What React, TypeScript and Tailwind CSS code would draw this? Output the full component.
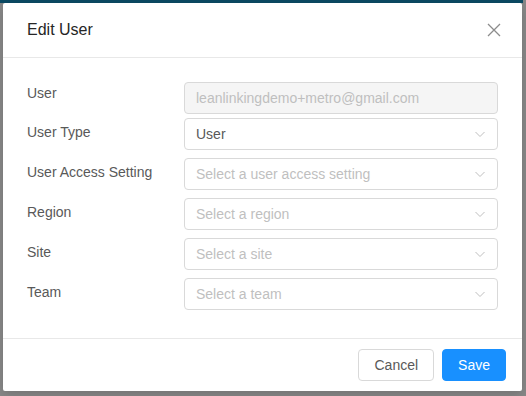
import React from 'react';

const Chevron = () => (
  <svg width="12" height="12" viewBox="0 0 12 12" fill="none" className="shrink-0">
    <path d="M1.5 4 L6 8.5 L10.5 4" stroke="#bfbfbf" strokeWidth="1" />
  </svg>
);

const SelectBox = ({ value, placeholder }: { value?: string; placeholder: string }) => (
  <div className="flex-1 h-[32px] flex items-center justify-between border border-[#d9d9d9] rounded-[4px] bg-white pl-[11px] pr-[11px]">
    <span className={value ? 'text-[#595959]' : 'text-[#bfbfbf]'}>{value ?? placeholder}</span>
    <Chevron />
  </div>
);

const rows: { label: string; value?: string; placeholder: string }[] = [
  { label: 'User Type', value: 'User', placeholder: '' },
  { label: 'User Access Setting', placeholder: 'Select a user access setting' },
  { label: 'Region', placeholder: 'Select a region' },
  { label: 'Site', placeholder: 'Select a site' },
  { label: 'Team', placeholder: 'Select a team' },
];

export default function App() {
  return (
    <div
      className="w-[526px] h-[396px] overflow-hidden bg-[#888888] flex flex-col text-[14px]"
      style={{ fontFamily: '"Liberation Sans", Arial, sans-serif' }}
    >
      <div className="h-[3px] bg-[#0b4a63] mr-[3px] shrink-0" />
      <div className="flex">
        <div className="ml-[3px] w-[519px] h-[388px] bg-white rounded-[2px] shadow-[0_4px_12px_rgba(0,0,0,0.15)] flex flex-col">
          {/* Header */}
          <div className="h-[55px] shrink-0 flex items-center justify-between pl-[24px] border-b border-[#e8e8e8]">
            <span className="text-[16px] leading-[22px] text-[#262626]">Edit User</span>
            <div className="w-[56px] h-[54px] flex items-center justify-center">
              <svg width="14" height="14" viewBox="0 0 14 14">
                <path d="M1 1 L13 13 M13 1 L1 13" stroke="#8c8c8c" strokeWidth="1.3" />
              </svg>
            </div>
          </div>

          {/* Body */}
          <div className="flex-1 px-[24px] pt-[24px]">
            <div className="flex items-start mb-[4px]">
              <div className="w-[157px] shrink-0 leading-[22px] text-[#595959]">User</div>
              <div className="flex-1 h-[32px] flex items-center border border-[#d9d9d9] rounded-[4px] bg-[#f5f5f5] pl-[11px] text-[#bfbfbf]">
                leanlinkingdemo+metro@gmail.com
              </div>
            </div>
            {rows.map((r, i) => (
              <div key={r.label} className={`flex items-start ${i === rows.length - 1 ? 'mb-[4px]' : 'mb-[8px]'}`}>
                <div className="w-[157px] shrink-0 mt-[3px] leading-[22px] text-[#595959]">{r.label}</div>
                <SelectBox value={r.value} placeholder={r.placeholder} />
              </div>
            ))}
          </div>

          {/* Footer */}
          <div className="h-[53px] shrink-0 border-t border-[#e8e8e8] flex items-center justify-end gap-[8px] pr-[16px]">
            <button className="h-[32px] px-[15px] border border-[#d9d9d9] rounded-[4px] bg-white text-[#595959]">
              Cancel
            </button>
            <button className="h-[32px] px-[15px] border border-[#1890ff] rounded-[4px] bg-[#1890ff] text-white">
              Save
            </button>
          </div>
        </div>
      </div>
    </div>
  );
}
